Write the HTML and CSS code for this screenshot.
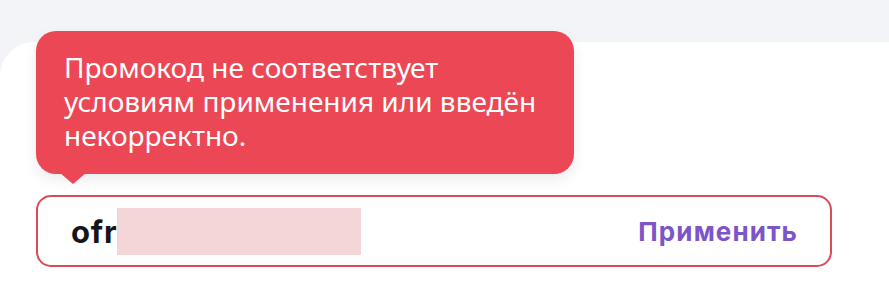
FILE: index.html
```html
<!DOCTYPE html>
<html lang="ru">
<head>
<meta charset="utf-8">
<link rel="stylesheet" href="styles.css">
</head>
<body>
<div class="card">
  <div class="tooltip">Промокод не соответствует условиям применения или введён некорректно.</div>
  <div class="field">
    <div class="code"><span class="code-text">ofr</span><span class="mask"></span></div>
    <button class="apply">Применить</button>
  </div>
</div>
</body>
</html>
```
FILE: styles.css
```css
html, body {
  margin: 0;
  padding: 0;
}
body {
  background: #f3f4f7;
  width: 889px;
  height: 291px;
  overflow: hidden;
}
.card {
  position: relative;
  margin-top: 42px;
  height: 249px;
  background: #ffffff;
  border-top-left-radius: 34px;
  padding: 153px 57px 0 36px;
  box-sizing: border-box;
}
.tooltip {
  position: absolute;
  left: 36px;
  top: -11px;
  width: 538px;
  height: 143px;
  box-sizing: border-box;
  padding: 19px 14px 0 28px;
  background: #eb4754;
  border-radius: 20px;
  color: #ffffff;
  font-family: "Noto Sans", "Open Sans", sans-serif;
  font-size: 28px;
  line-height: 34px;
  box-shadow: 0 6px 14px rgba(0, 0, 0, 0.08);
}
.tooltip::after {
  content: "";
  position: absolute;
  left: 24px;
  bottom: -10px;
  width: 0;
  height: 0;
  border-left: 13px solid transparent;
  border-right: 13px solid transparent;
  border-top: 11px solid #eb4754;
}
.field {
  display: flex;
  align-items: center;
  justify-content: space-between;
  height: 72px;
  box-sizing: border-box;
  border: 2px solid #d84b59;
  border-radius: 15px;
  padding: 0 32px 0 33px;
}
.code {
  display: flex;
  align-items: center;
}
.code-text {
  font-family: "Inter", "Noto Sans", sans-serif;
  font-weight: 700;
  font-size: 31px;
  color: #16161a;
  letter-spacing: 0.8px;
}
.mask {
  display: block;
  width: 244px;
  height: 47px;
  background: #f4d5d8;
}
.apply {
  border: 0;
  background: none;
  padding: 0;
  font-family: "Inter", "Noto Sans", sans-serif;
  font-weight: 700;
  font-size: 26px;
  letter-spacing: 1.1px;
  color: #7c55c8;
  cursor: pointer;
}
```
